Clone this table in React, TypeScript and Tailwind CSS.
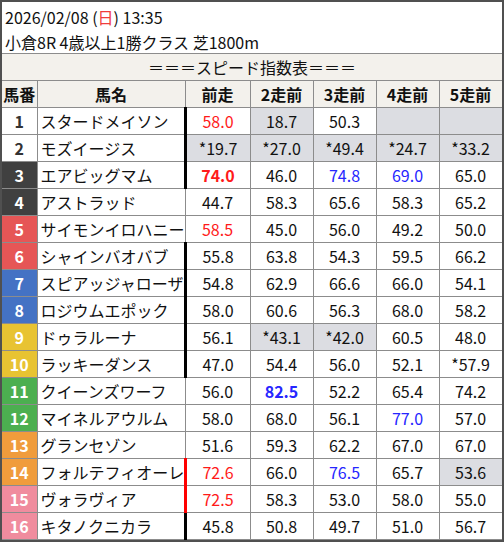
import { ReactElement } from 'react'

type Cell = { v: string; c?: 'red' | 'blue'; b?: boolean; g?: boolean }
type Row = { no: number; name: string; bar: 'black' | 'red' | 'none'; cells: Cell[] }

const frameColors: Record<number, string> = {
    1: 'bg-white text-[#333]',
    2: 'bg-white text-[#333]',
    3: 'bg-[#404040] text-white',
    4: 'bg-[#404040] text-white',
    5: 'bg-[#e65656] text-white',
    6: 'bg-[#e65656] text-white',
    7: 'bg-[#4472c4] text-white',
    8: 'bg-[#4472c4] text-white',
    9: 'bg-[#e8c332] text-white',
    10: 'bg-[#e8c332] text-white',
    11: 'bg-[#4caf50] text-white',
    12: 'bg-[#4caf50] text-white',
    13: 'bg-[#f09c3c] text-white',
    14: 'bg-[#f09c3c] text-white',
    15: 'bg-[#f08c9e] text-white',
    16: 'bg-[#f08c9e] text-white',
}

const rows: Row[] = [
    { no: 1, name: 'スタードメイソン', bar: 'black', cells: [{ v: '58.0', c: 'red' }, { v: '18.7', g: true }, { v: '50.3' }, { v: '', g: true }, { v: '', g: true }] },
    { no: 2, name: 'モズイージス', bar: 'black', cells: [{ v: '*19.7', g: true }, { v: '*27.0', g: true }, { v: '*49.4', g: true }, { v: '*24.7', g: true }, { v: '*33.2', g: true }] },
    { no: 3, name: 'エアビッグマム', bar: 'black', cells: [{ v: '74.0', c: 'red', b: true }, { v: '46.0' }, { v: '74.8', c: 'blue' }, { v: '69.0', c: 'blue' }, { v: '65.0' }] },
    { no: 4, name: 'アストラッド', bar: 'none', cells: [{ v: '44.7' }, { v: '58.3' }, { v: '65.6' }, { v: '58.3' }, { v: '65.2' }] },
    { no: 5, name: 'サイモンイロハニー', bar: 'none', cells: [{ v: '58.5', c: 'red' }, { v: '45.0' }, { v: '56.0' }, { v: '49.2' }, { v: '50.0' }] },
    { no: 6, name: 'シャインバオバブ', bar: 'black', cells: [{ v: '55.8' }, { v: '63.8' }, { v: '54.3' }, { v: '59.5' }, { v: '66.2' }] },
    { no: 7, name: 'スピアッジャローザ', bar: 'black', cells: [{ v: '54.8' }, { v: '62.9' }, { v: '66.6' }, { v: '66.0' }, { v: '54.1' }] },
    { no: 8, name: 'ロジウムエポック', bar: 'black', cells: [{ v: '58.0' }, { v: '60.6' }, { v: '56.3' }, { v: '68.0' }, { v: '58.2' }] },
    { no: 9, name: 'ドゥラルーナ', bar: 'black', cells: [{ v: '56.1' }, { v: '*43.1', g: true }, { v: '*42.0', g: true }, { v: '60.5' }, { v: '48.0' }] },
    { no: 10, name: 'ラッキーダンス', bar: 'black', cells: [{ v: '47.0' }, { v: '54.4' }, { v: '56.0' }, { v: '52.1' }, { v: '*57.9' }] },
    { no: 11, name: 'クイーンズワーフ', bar: 'none', cells: [{ v: '56.0' }, { v: '82.5', c: 'blue', b: true }, { v: '52.2' }, { v: '65.4' }, { v: '74.2' }] },
    { no: 12, name: 'マイネルアウルム', bar: 'none', cells: [{ v: '58.0' }, { v: '68.0' }, { v: '56.1' }, { v: '77.0', c: 'blue' }, { v: '57.0' }] },
    { no: 13, name: 'グランセゾン', bar: 'none', cells: [{ v: '51.6' }, { v: '59.3' }, { v: '62.2' }, { v: '67.0' }, { v: '67.0' }] },
    { no: 14, name: 'フォルテフィオーレ', bar: 'red', cells: [{ v: '72.6', c: 'red' }, { v: '66.0' }, { v: '76.5', c: 'blue' }, { v: '65.7' }, { v: '53.6', g: true }] },
    { no: 15, name: 'ヴォラヴィア', bar: 'red', cells: [{ v: '72.5', c: 'red' }, { v: '58.3' }, { v: '53.0' }, { v: '58.0' }, { v: '55.0' }] },
    { no: 16, name: 'キタノクニカラ', bar: 'black', cells: [{ v: '45.8' }, { v: '50.8' }, { v: '49.7' }, { v: '51.0' }, { v: '56.7' }] },
]

const cellBase = 'border border-[#8c8c8c] h-[27px] p-0 text-center'

const App = (): ReactElement => {
    return (
        <div
            className="w-[504px] h-[542px] border-2 border-[#505050] bg-white text-[16px] text-[#111] overflow-hidden"
            style={{ fontFamily: '"Noto Sans CJK JP", "Noto Sans", sans-serif' }}
        >
            <div className="h-[51px] pl-[3px] pt-[3px] leading-[25px] text-[16px]">
                <div>
                    2026/02/08 (<span className="text-[#f03c3c]">日</span>) 13:35
                </div>
                <div>小倉8R 4歳以上1勝クラス 芝1800m</div>
            </div>
            <table className="table-fixed border-collapse w-[500px] leading-none">
                <colgroup>
                    <col className="w-[35px]" />
                    <col className="w-[148px]" />
                    <col className="w-[65px]" />
                    <col className="w-[63px]" />
                    <col className="w-[63px]" />
                    <col className="w-[63px]" />
                    <col className="w-[63px]" />
                </colgroup>
                <thead>
                    <tr className="bg-[#f3f1ec]">
                        <td colSpan={7} className={`${cellBase} border-l-0 border-r-0`}>
                            ＝＝＝スピード指数表＝＝＝
                        </td>
                    </tr>
                    <tr className="bg-[#f3f1ec] font-bold">
                        <td className={`${cellBase} border-l-0`}>馬番</td>
                        <td className={cellBase}>馬名</td>
                        <td className={cellBase}>前走</td>
                        <td className={cellBase}>2走前</td>
                        <td className={cellBase}>3走前</td>
                        <td className={cellBase}>4走前</td>
                        <td className={cellBase}>5走前</td>
                    </tr>
                </thead>
                <tbody>
                    {rows.map((r) => (
                        <tr key={r.no}>
                            <td className={`${cellBase} border-l-0 font-bold ${frameColors[r.no]}`}>{r.no}</td>
                            <td className={`${cellBase} text-left pl-[3px] whitespace-nowrap`}>{r.name}</td>
                            {r.cells.map((c, i) => (
                                <td
                                    key={i}
                                    className={[
                                        cellBase,
                                        c.g ? 'bg-[#dcdde2]' : 'bg-white',
                                        c.c === 'red' ? 'text-[#ff1a1a]' : c.c === 'blue' ? 'text-[#2626ff]' : '',
                                        c.b ? 'font-bold' : '',
                                        i === 0 && r.bar === 'black' ? 'border-l-[3px] border-l-black' : '',
                                        i === 0 && r.bar === 'red' ? 'border-l-[3px] border-l-[#ff0000]' : '',
                                    ].join(' ')}
                                >
                                    {c.v}
                                </td>
                            ))}
                        </tr>
                    ))}
                </tbody>
            </table>
        </div>
    )
}

export default App
